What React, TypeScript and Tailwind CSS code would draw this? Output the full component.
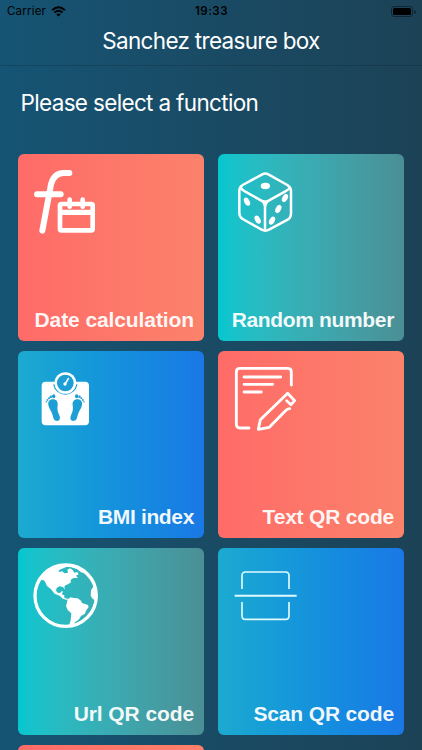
import type { ReactNode } from "react";
import { clsx } from "clsx";

type Tone = "coral" | "teal" | "blue";

const TONES: Record<Tone, string> = {
  coral: "from-[#ff6b68] to-[#fb826b]",
  teal: "from-[#02c7cf] to-[#4a8f95]",
  blue: "from-[#1caad0] to-[#1a78e6]",
};

function DateIcon() {
  return (
    <svg viewBox="24 27 270 270" className="size-[90px]" fill="none" stroke="#fff" strokeLinecap="round" strokeLinejoin="round">
      <path d="M97 257 L123 118 Q132 85 160 84 H178 M81 148 H152" strokeWidth="18" />
      <rect x="150" y="177" width="98" height="79" rx="4" strokeWidth="14" />
      <path d="M153 202 H245" strokeWidth="16" />
      <path d="M179 164 V185 M218 164 V185" strokeWidth="14" />
    </svg>
  );
}

function DiceIcon() {
  return (
    <svg viewBox="24 27 270 270" className="size-[90px]" fill="none" stroke="#fff" strokeWidth="7.500" strokeLinejoin="round">
      <path d="M157 88 Q166 83 175 88 L232 120 Q243 127 243 138 V206 Q243 218 233 224 L177 254 Q166 260 155 254 L98 222 Q88 216 88 204 V137 Q88 126 98 120 Z" />
      <path d="M92 127 Q97 136 106 140 L154 167 Q165 173 176 167 L226 139 Q236 134 240 127 M165 171 V256" />
      <path d="M150 165 Q164 174 165 192 Q167 174 181 165 Q166 173 150 165 Z" fill="#fff" strokeWidth="4" />
      <g fill="#fff" stroke="none">
        <ellipse cx="166" cy="123" rx="14" ry="9.500" />
        <ellipse cx="111" cy="170" rx="8" ry="13" transform="rotate(-28 111 170)" />
        <ellipse cx="143" cy="224" rx="8" ry="13" transform="rotate(-28 143 224)" />
        <ellipse cx="225" cy="159" rx="8" ry="13" transform="rotate(28 225 159)" />
        <ellipse cx="205" cy="192" rx="8" ry="13" transform="rotate(28 205 192)" />
        <ellipse cx="186" cy="227" rx="8" ry="13" transform="rotate(28 186 227)" />
      </g>
    </svg>
  );
}

function Foot() {
  return (
    <g>
      <path d="M115 181 C113 170 120 164 129 164 C139 164 145 172 143 182 C141 194 143 202 148 212 C152 222 149 229 141 229 C133 229 130 223 128 212 C125 199 117 193 115 181 Z" />
      <ellipse cx="131" cy="155" rx="5" ry="6" />
      <circle cx="122.500" cy="156.500" r="3.700" />
      <circle cx="117" cy="161" r="3" />
      <circle cx="112.500" cy="166" r="2.700" />
      <circle cx="109" cy="171.500" r="2.300" />
    </g>
  );
}

function ScaleIcon() {
  return (
    <svg viewBox="24 19 270 270" className="size-[90px]">
      <rect x="95" y="111" width="142" height="131" rx="12" fill="#fff" />
      <path d="M132 119 A34.500 34.500 0 0 0 200 119" fill="none" stroke="#1d9fd6" strokeWidth="5" />
      <circle cx="166" cy="115" r="32.500" fill="#fff" />
      <circle cx="166" cy="115" r="25" fill="#1d9fd6" />
      <path d="M166 117 L175 102" stroke="#fff" strokeWidth="5" strokeLinecap="round" />
      <circle cx="165" cy="118" r="5" fill="#fff" />
      <g fill="#1d9fd6">
        <Foot />
        <g transform="translate(331 0) scale(-1 1)">
          <Foot />
        </g>
      </g>
    </svg>
  );
}

function NoteIcon() {
  return (
    <svg viewBox="24 19 270 270" className="size-[90px]" fill="none" stroke="#fff" strokeWidth="8.500" strokeLinecap="round" strokeLinejoin="round">
      <path d="M244 121 V82 Q244 71 233 71 H90 Q79 71 79 82 V239 Q79 250 90 250 H117" />
      <path d="M102 97 H212 M102 119 H188 M102 142 H154" />
      <path d="M239 192 Q232 192 222 203 L178 248 L145 254 L151 225 L233 146 L254 168 L243 180 L230 168" />
    </svg>
  );
}

function GlobeIcon() {
  return (
    <svg viewBox="24 25 270 270" className="size-[90px]">
      <circle cx="167" cy="168" r="92" fill="none" stroke="#fff" strokeWidth="10" />
      <g fill="#fff">
        <path d="M94 122 L97 108 L116 90 L140 80 L165 76 L171 81 L160 86 L147 91 L146 97 L156 95 L164 101 L174 99 L172 90 L180 86 L188 91 L193 99 L202 97 L206 104 L198 108 L204 115 L190 115 L182 121 L183 128 L174 134 L166 137 L163 142 L165 150 L159 142 L148 140 L140 145 L138 153 L144 160 L151 159 L156 154 L159 156 L155 164 L163 167 L163 174 L174 178 L172 181 L158 177 L150 169 L134 162 L123 149 L111 139 L104 124 L99 121 Z" />
        <path d="M173 179 L182 173 L191 175 L203 176 L213 183 L216 190 L234 196 L236 202 L228 213 L225 222 L213 229 L206 240 L196 247 L189 258 L177 258 L182 242 L184 221 L173 211 L168 199 L171 188 Z" />
        <path d="M177 76 L194 78 L216 86 L226 98 L216 99 L208 94 L201 88 L184 82 Z" />
        <path d="M248 144 L243 152 L242 168 L248 178 L258 182 L262 166 L258 145 L250 138 Z" />
      </g>
    </svg>
  );
}

function ScanIcon() {
  return (
    <svg viewBox="24 25 270 270" className="size-[90px]" fill="none" stroke="#dffaff" strokeWidth="5">
      <path d="M96 148 V108 Q96 97 107 97 H226 Q237 97 237 108 V148 M96 187 V228 Q96 239 107 239 H226 Q237 239 237 228 V187" />
      <path d="M74 168 H260" strokeWidth="6" />
    </svg>
  );
}

function Card({ tone, label, spacing, children }: { tone: Tone; label?: string; spacing?: string; children?: ReactNode }) {
  return (
    <div className={clsx("flex h-[186.500px] flex-col justify-between overflow-hidden rounded-[6px] bg-linear-to-r", TONES[tone])}>
      {children}
      {label && (
        <div className={clsx("pr-[10px] pb-[6px] text-right font-['Liberation_Sans',Arial,sans-serif] text-[21px] leading-[30px] font-bold whitespace-nowrap text-white/95", spacing)}>
          {label}
        </div>
      )}
    </div>
  );
}

function StatusBar() {
  return (
    <div className="grid h-[22px] grid-cols-3 items-center pt-px pr-[6px] pl-[7px] text-[11.500px] text-black">
      <div className="flex items-center gap-[5px]">
        <span className="tracking-[0.2px]">Carrier</span>
        <svg viewBox="0 0 16 12" className="h-[11px] w-[15px]" fill="none" stroke="#000" strokeWidth="2.200">
          <path d="M1 4.500 Q8 -1.800 15 4.500 M3.500 7.200 Q8 3.200 12.500 7.200" />
          <path d="M8 11.500 L5.600 9.200 Q8 7.200 10.400 9.200 Z" fill="#000" stroke="none" />
        </svg>
      </div>
      <span className="text-center font-semibold tracking-[0.5px]">19:33</span>
      <div className="flex items-center justify-end gap-px">
        <div className="h-[11px] w-[22px] rounded-[3px] border border-black/40 p-px">
          <div className="h-full rounded-[1.500px] bg-black" />
        </div>
        <div className="h-[4px] w-[1.500px] rounded-r bg-black/40" />
      </div>
    </div>
  );
}

export default function App() {
  return (
    <div className="h-[750px] w-[422px] overflow-hidden bg-linear-to-r from-[#155474] to-[#1c4256] font-[Inter,sans-serif]">
      <header className="h-[66px] border-b border-black/15">
        <StatusBar />
        <h1 className="text-center text-[22.500px] leading-[38px] tracking-[-0.7px] text-white">Sanchez treasure box</h1>
      </header>
      <h2 className="pt-[21px] pl-[20.500px] text-[22.500px] leading-[32px] tracking-[-0.66px] text-white">Please select a function</h2>
      <main className="mt-[35px] grid grid-cols-2 gap-x-[14px] gap-y-[10.500px] px-[18px]">
        <Card tone="coral" label="Date calculation" spacing="tracking-[-0.1px]"><DateIcon /></Card>
        <Card tone="teal" label="Random number" spacing="tracking-[-0.35px]"><DiceIcon /></Card>
        <Card tone="blue" label="BMI index" spacing="tracking-[-0.35px]"><ScaleIcon /></Card>
        <Card tone="coral" label="Text QR code" spacing="tracking-[-0.2px]"><NoteIcon /></Card>
        <Card tone="teal" label="Url QR code" spacing="tracking-[-0.1px]"><GlobeIcon /></Card>
        <Card tone="blue" label="Scan QR code" spacing="tracking-[-0.15px]"><ScanIcon /></Card>
        <Card tone="coral" />
      </main>
    </div>
  );
}
